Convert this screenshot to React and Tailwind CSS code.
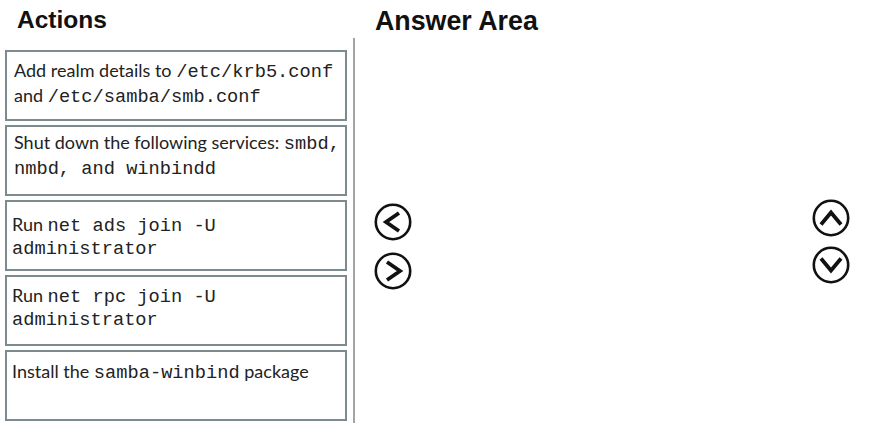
const sans = { fontFamily: '"Lato", "Noto Sans", sans-serif' };

function Mono({ children }) {
    return <span className="font-['Liberation_Mono',monospace] text-[18.7px]">{children}</span>;
}

function ActionBox({ className, children }) {
    return (
        <div
            className={
                'h-[71px] border-2 border-[#7d8b90] bg-white text-[18px] text-[#222] font-["Lato","Noto_Sans",sans-serif] ' +
                className
            }
        >
            {children}
        </div>
    );
}

function CircleArrow({ dir }) {
    const paths = {
        left: 'M25 10 L12 19 L25 28',
        right: 'M13 10 L26 19 L13 28',
        up: 'M9 25.5 L19 13.5 L29 25.5',
        down: 'M9 12.5 L19 24.5 L29 12.5',
    };
    return (
        <svg width="38" height="38" viewBox="0 0 38 38">
            <circle cx="19" cy="19" r="17.2" fill="none" stroke="#111" strokeWidth="2.6" />
            <path d={paths[dir]} fill="none" stroke="#111" strokeWidth="3.8" strokeLinecap="butt" strokeLinejoin="miter" />
        </svg>
    );
}

export default function App() {
    return (
        <div className="w-[872px] h-[431px] bg-white flex overflow-hidden">
            <div className="w-[353px] flex flex-col pl-[5px] pr-[6px]">
                <h2 className="h-[50px] pl-[12px] pt-[6px] text-[24.5px] leading-[28px] font-bold text-[#111] font-['Liberation_Sans',Arial,sans-serif]">
                    Actions
                </h2>
                <div className="flex flex-col gap-[4px]">
                    <ActionBox className="pl-[7px] pt-[7px] leading-[23px]">
                        Add realm details to <Mono>/etc/krb5.conf</Mono>
                        <br />
                        and <Mono>/etc/samba/smb.conf</Mono>
                    </ActionBox>
                    <ActionBox className="pl-[7px] pt-[4px] leading-[23px]">
                        Shut down the following services: <Mono>smbd,</Mono>
                        <br />
                        <Mono>nmbd, and winbindd</Mono>
                    </ActionBox>
                    <ActionBox className="pl-[5px] pt-[12px] leading-[21px]">
                        Run <Mono>net ads join -U</Mono>
                        <br />
                        <Mono>administrator</Mono>
                    </ActionBox>
                    <ActionBox className="pl-[5px] pt-[8px] leading-[21px]">
                        Run <Mono>net rpc join -U</Mono>
                        <br />
                        <Mono>administrator</Mono>
                    </ActionBox>
                    <ActionBox className="pl-[5px] pt-[8px] leading-[23px]">
                        Install the <Mono>samba-winbind</Mono> package
                    </ActionBox>
                </div>
            </div>
            <div className="w-[2px] mt-[38px] h-[385px] bg-[#a3a3a3]" />
            <div className="flex-1 flex flex-col">
                <h2 className="h-[50px] pl-[20px] pt-[6px] text-[26.8px] leading-[30px] font-bold text-[#111] font-['Liberation_Sans',Arial,sans-serif]">
                    Answer Area
                </h2>
                <div className="flex justify-between pl-[19px] pr-[22px]" style={sans}>
                    <div className="flex flex-col gap-[11px] mt-[153px]">
                        <CircleArrow dir="left" />
                        <CircleArrow dir="right" />
                    </div>
                    <div className="flex flex-col gap-[9px] mt-[149px]">
                        <CircleArrow dir="up" />
                        <CircleArrow dir="down" />
                    </div>
                </div>
            </div>
        </div>
    );
}
